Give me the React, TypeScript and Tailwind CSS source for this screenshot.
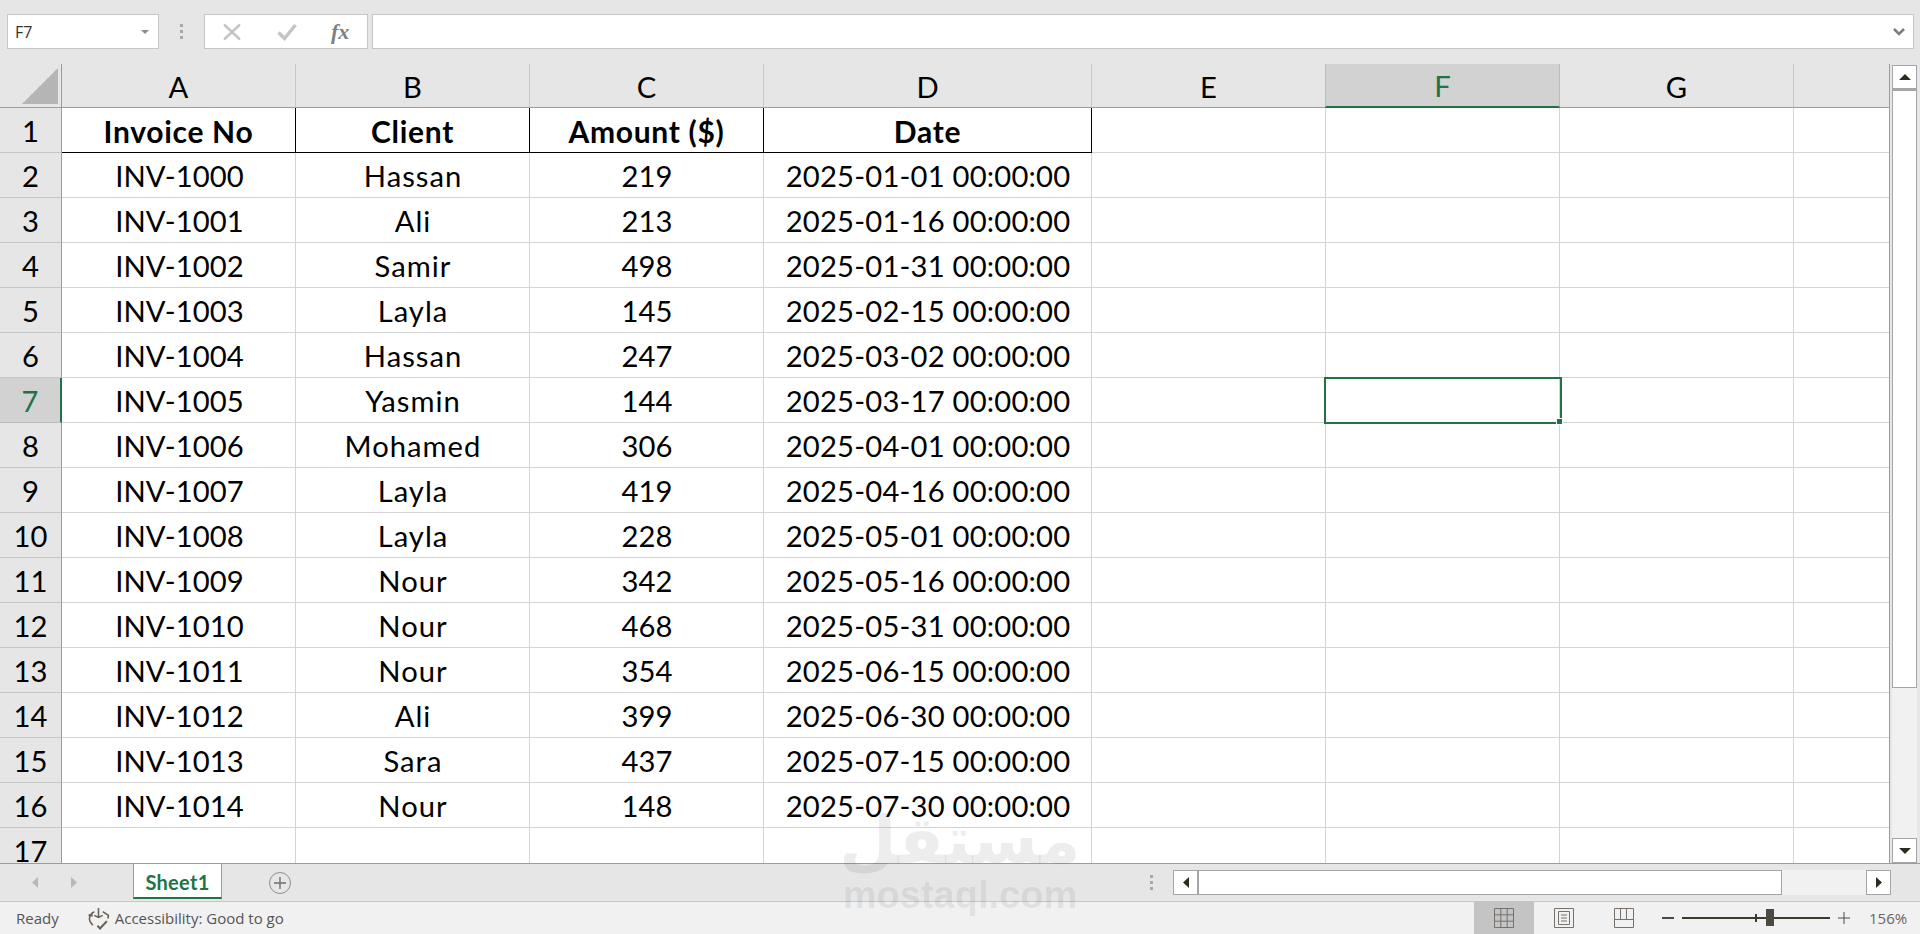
import React from 'react';

const rows = [
  ['INV-1000', 'Hassan', '219', '2025-01-01 00:00:00'],
  ['INV-1001', 'Ali', '213', '2025-01-16 00:00:00'],
  ['INV-1002', 'Samir', '498', '2025-01-31 00:00:00'],
  ['INV-1003', 'Layla', '145', '2025-02-15 00:00:00'],
  ['INV-1004', 'Hassan', '247', '2025-03-02 00:00:00'],
  ['INV-1005', 'Yasmin', '144', '2025-03-17 00:00:00'],
  ['INV-1006', 'Mohamed', '306', '2025-04-01 00:00:00'],
  ['INV-1007', 'Layla', '419', '2025-04-16 00:00:00'],
  ['INV-1008', 'Layla', '228', '2025-05-01 00:00:00'],
  ['INV-1009', 'Nour', '342', '2025-05-16 00:00:00'],
  ['INV-1010', 'Nour', '468', '2025-05-31 00:00:00'],
  ['INV-1011', 'Nour', '354', '2025-06-15 00:00:00'],
  ['INV-1012', 'Ali', '399', '2025-06-30 00:00:00'],
  ['INV-1013', 'Sara', '437', '2025-07-15 00:00:00'],
  ['INV-1014', 'Nour', '148', '2025-07-30 00:00:00'],
];

const gridCols = 'grid grid-cols-[62px_234px_234px_234px_328px_234px_234px_234px_96px]';
const tracking = ['tracking-[0.1px] pl-[2px]', 'tracking-[1px] pl-[1px]', 'pl-[1px]', 'tracking-[0.2px] pl-[1px]'];

const Dots = () => (
  <div className="flex flex-col gap-[3px]">
    <div className="w-[3px] h-[3px] bg-[#a8a8a8]" />
    <div className="w-[3px] h-[3px] bg-[#a8a8a8]" />
    <div className="w-[3px] h-[3px] bg-[#a8a8a8]" />
  </div>
);

const FormulaBar = () => (
  <div className="h-[64px] flex items-start pt-[14px] pl-[7px] bg-[#e6e6e6] shrink-0">
    <div className="w-[152px] h-[35px] bg-white border border-[#c6c6c6] flex items-center justify-between pl-[7px] pr-[9px]">
      <span className="text-[16px] text-[#333] [font-family:'Open_Sans',sans-serif]">F7</span>
      <svg width="8" height="4" viewBox="0 0 8 4"><path d="M0 0h8L4 4z" fill="#8a8a8a" /></svg>
    </div>
    <div className="w-[45px] h-[35px] flex items-center justify-center">
      <Dots />
    </div>
    <div className="w-[164px] h-[35px] bg-white border border-[#c6c6c6] flex items-center pl-[18px]">
      <svg width="18" height="18" viewBox="0 0 18 18" fill="none" stroke="#c4c4c4" strokeWidth="2.4">
        <path d="M1 1.500l16 15M17 1.500l-16 15" />
      </svg>
      <svg className="ml-[36px]" width="20" height="18" viewBox="0 0 20 18" fill="none" stroke="#c4c4c4" strokeWidth="3.4">
        <path d="M1.500 9.500l6 6L18.500 2" />
      </svg>
      <span className="ml-[34px] text-[22px] italic font-bold text-[#808080] leading-none [font-family:'Liberation_Serif',serif]">fx</span>
    </div>
    <div className="ml-[4px] w-[1542px] h-[35px] bg-white border border-[#c6c6c6] flex items-center justify-end pr-[8px]">
      <svg width="12" height="8" viewBox="0 0 12 8" fill="none" stroke="#7d7d7d" strokeWidth="2.6">
        <path d="M1 1l5 5 5-5" />
      </svg>
    </div>
  </div>
);

const ColHead = ({ label, selected }: { label: string; selected?: boolean }) => (
  <div
    className={
      selected
        ? 'h-[44px] pt-[2px] bg-[#d2d2d2] border-x border-[#bcbcbc] -ml-px border-b-[2px] border-b-[#217346] flex items-center justify-center text-[#217346]'
        : 'h-[44px] pt-[2px] border-r border-[#c6c6c6] border-b border-b-[#9c9c9c] flex items-center justify-center text-black'
    }
  >
    {label}
  </div>
);

const RowHead = ({ n, selected }: { n: number; selected?: boolean }) => (
  <div
    className={
      selected
        ? 'h-[45px] pt-[2px] bg-[#d2d2d2] border-r-[2px] border-r-[#217346] border-b border-b-[#bcbcbc] flex items-center justify-center text-[#217346]'
        : 'h-[45px] pt-[2px] bg-[#e6e6e6] border-r border-r-[#9c9c9c] border-b border-b-[#c6c6c6] flex items-center justify-center text-black'
    }
  >
    {n}
  </div>
);

const Cell = ({ text, className }: { text: string; className?: string }) => (
  <div className={`h-[45px] pt-[2px] bg-white border-r border-b border-[#d4d4d4] flex items-center justify-center text-black whitespace-nowrap ${className ?? ''}`}>
    {text}
  </div>
);

const HeadCell = ({ text }: { text: string }) => (
  <div className="h-[45px] pt-[1px] bg-white border-r border-b border-black flex items-center justify-center text-black text-[30px] tracking-[0.7px] font-bold whitespace-nowrap">
    {text}
  </div>
);

const Blank = ({ last, selected }: { last?: boolean; selected?: boolean }) => (
  <div
    className={
      last
        ? 'h-[45px] bg-white border-b border-[#d4d4d4]'
        : selected
          ? 'relative z-10 h-[45px] bg-white border-r border-b border-[#d4d4d4]'
          : 'h-[45px] bg-white border-r border-b border-[#d4d4d4]'
    }
  >
    {selected && (
      <div className="absolute top-[-1px] left-[-2px] w-[238px] h-[47px] border-[2px] border-[#217346]">
        <div className="absolute right-[-3px] bottom-[-3px] w-[7px] h-[7px] bg-[#217346] border border-white" />
      </div>
    )}
  </div>
);

const Sheet = () => (
  <div className="w-[1890px] h-[799px] overflow-hidden border-r border-[#9c9c9c] text-[29.2px] leading-none [font-family:Lato,sans-serif]">
    <div className={gridCols}>
      <div className="h-[44px] relative border-r border-[#9c9c9c] border-b border-b-[#9c9c9c] flex items-end justify-end pr-[3px] pb-[3px]">
        <svg width="36" height="36" viewBox="0 0 36 36"><path d="M36 0v36H0z" fill="#b5b5b5" /></svg>
      </div>
      {['A', 'B', 'C', 'D', 'E'].map((c) => <ColHead key={c} label={c} />)}
      <ColHead label="F" selected />
      <ColHead label="G" />
      <div className="h-[44px] border-b border-b-[#9c9c9c]" />
    </div>
    <div className={gridCols}>
      <RowHead n={1} />
      <HeadCell text="Invoice No" />
      <HeadCell text="Client" />
      <HeadCell text="Amount ($)" />
      <HeadCell text="Date" />
      <Blank />
      <Blank />
      <Blank />
      <Blank last />
      {rows.map((r, i) => (
        <React.Fragment key={r[0]}>
          <RowHead n={i + 2} selected={i + 2 === 7} />
          {r.map((v, j) => <Cell key={j} text={v} className={tracking[j]} />)}
          <Blank />
          <Blank selected={i + 2 === 7} />
          <Blank />
          <Blank last />
        </React.Fragment>
      ))}
      <RowHead n={17} />
      <Cell text="" />
      <Cell text="" />
      <Cell text="" />
      <Cell text="" />
      <Blank />
      <Blank />
      <Blank />
      <Blank last />
    </div>
  </div>
);

const VScrollbar = () => (
  <div className="w-[29px] h-[799px] pl-[2px] pt-[1px] flex flex-col">
    <div className="w-[25px] h-[24px] bg-white border border-[#a6a6a6] flex items-center justify-center">
      <svg width="12" height="6" viewBox="0 0 12 6"><path d="M0 6h12L6 0z" fill="#2f2b20" /></svg>
    </div>
    <div className="w-[25px] h-[600px] bg-white border border-[#a6a6a6] border-t-[2px]" />
    <div className="w-[25px] h-[150px] bg-[#f1f1f1]" />
    <div className="w-[25px] h-[25px] bg-white border border-[#a6a6a6] flex items-center justify-center">
      <svg width="12" height="6" viewBox="0 0 12 6"><path d="M0 0h12L6 6z" fill="#2f2b20" /></svg>
    </div>
  </div>
);

const TabBar = () => (
  <div className="h-[39px] shrink-0 flex bg-[#e6e6e6] border-t border-t-[#9c9c9c] border-b border-b-[#c6c6c6]">
    <div className="w-[133px] flex items-center pl-[32px] gap-[33px]">
      <svg width="6" height="11" viewBox="0 0 6 11"><path d="M6 0v11L0 5.500z" fill="#b8b8b8" /></svg>
      <svg width="6" height="11" viewBox="0 0 6 11"><path d="M0 0v11l6-5.500z" fill="#b8b8b8" /></svg>
    </div>
    <div className="w-[89px] h-[35px] pt-[3px] bg-white border-x border-x-[#9c9c9c] border-b-[2px] border-b-[#217346] flex items-center justify-center text-[20px] tracking-[0.3px] font-bold text-[#217346] [font-family:Lato,sans-serif]">
      Sheet1
    </div>
    <div className="ml-[47px] w-[22px] h-[22px] mt-[8px] rounded-full border border-[#8f8f8f] bg-transparent flex items-center justify-center">
      <svg width="12" height="12" viewBox="0 0 12 12" fill="none" stroke="#6f6f6f" strokeWidth="1.4"><path d="M6 0v12M0 6h12" /></svg>
    </div>
    <div className="ml-[859px] flex items-center w-[23px]">
      <Dots />
    </div>
    <div className="flex mt-[6px] h-[25px]">
      <div className="w-[25px] bg-white border border-[#a6a6a6] flex items-center justify-center">
        <svg width="6" height="11" viewBox="0 0 6 11"><path d="M6 0v11L0 5.500z" fill="#2f2b20" /></svg>
      </div>
      <div className="w-[585px] bg-white border border-[#a6a6a6] border-l-[2px] -ml-px" />
      <div className="w-[84px] bg-[#f1f1f1]" />
      <div className="w-[25px] bg-white border border-[#a6a6a6] flex items-center justify-center">
        <svg width="6" height="11" viewBox="0 0 6 11"><path d="M0 0v11l6-5.500z" fill="#2f2b20" /></svg>
      </div>
    </div>
  </div>
);

const StatusBar = () => (
  <div className="flex-1 flex items-center bg-[#f1f1f1] text-[15px] text-[#555] [font-family:'Open_Sans',sans-serif]">
    <span className="ml-[16px]">Ready</span>
    <svg className="ml-[28px]" width="23" height="23" viewBox="0 0 22 22" fill="none" stroke="#6a5f55" strokeWidth="1.5">
      <path d="M11 1v8M7 8l4 2 4-2" />
      <path d="M7 4.500A7 7 0 0 0 3 14l2.500 3.500M15 4.500L20.500 8 20 11" />
      <path d="M1.500 8l4 0M10 18l2.500 2.500L19 13.500" strokeWidth="2" />
    </svg>
    <span className="ml-[5px]">Accessibility: Good to go</span>
    <div className="ml-auto flex h-[32px] items-center">
      <div className="w-[60px] h-full bg-[#c4c4c4] flex items-center justify-center">
        <svg width="20" height="20" viewBox="0 0 20 20" fill="none" stroke="#78706a" strokeWidth="1"><path d="M.5.500h19v19H.5zM.5 6.800h19M.5 13.200h19M6.800.500v19M13.200.500v19" /></svg>
      </div>
      <div className="w-[60px] h-full flex items-center justify-center">
        <svg width="20" height="20" viewBox="0 0 20 20" fill="none" stroke="#78706a" strokeWidth="1"><path d="M.5.500h19v19H.5zM4.500 3.500h11v13h-11zM7 7h6M7 10h6M7 13h6" /></svg>
      </div>
      <div className="w-[60px] h-full flex items-center justify-center">
        <svg width="20" height="20" viewBox="0 0 20 20" fill="none" stroke="#78706a" strokeWidth="1"><path d="M.5.500h19v19H.5zM.5 11.500h18.500M6.500.500v11M12.500.500v11" /></svg>
      </div>
      <div className="ml-[8px] w-[12px] h-[2px] bg-[#4e4a3e]" />
      <div className="relative ml-[8px] w-[148px] h-[2px] bg-[#3d3a2e]">
        <div className="absolute left-[73px] top-[-3px] w-[2px] h-[8px] bg-[#3d3a2e]" />
        <div className="absolute left-[84px] top-[-8px] w-[8px] h-[17px] bg-[#4a4a40]" />
      </div>
      <svg className="ml-[8px]" width="12" height="12" viewBox="0 0 12 12" fill="none" stroke="#4e4a3e" strokeWidth="1"><path d="M6 0v12M0 6h12" /></svg>
      <span className="ml-[19px] w-[51px] text-[#666]">156%</span>
    </div>
  </div>
);

export default function App() {
  return (
    <div className="relative w-[1920px] h-[934px] overflow-hidden flex flex-col bg-[#e6e6e6]">
      <FormulaBar />
      <div className="flex h-[799px] shrink-0">
        <Sheet />
        <VScrollbar />
      </div>
      <TabBar />
      <StatusBar />
      <div className="absolute left-[845px] top-[806px] w-[230px] flex flex-col items-center pointer-events-none text-black/[0.07] font-bold">
        <span dir="rtl" className="text-[66px] leading-[70px] [font-family:'DejaVu_Sans',sans-serif]">مستقل</span>
        <span className="text-[38px] leading-[38px] [font-family:'Liberation_Sans',sans-serif]">mostaql.com</span>
      </div>
    </div>
  );
}
